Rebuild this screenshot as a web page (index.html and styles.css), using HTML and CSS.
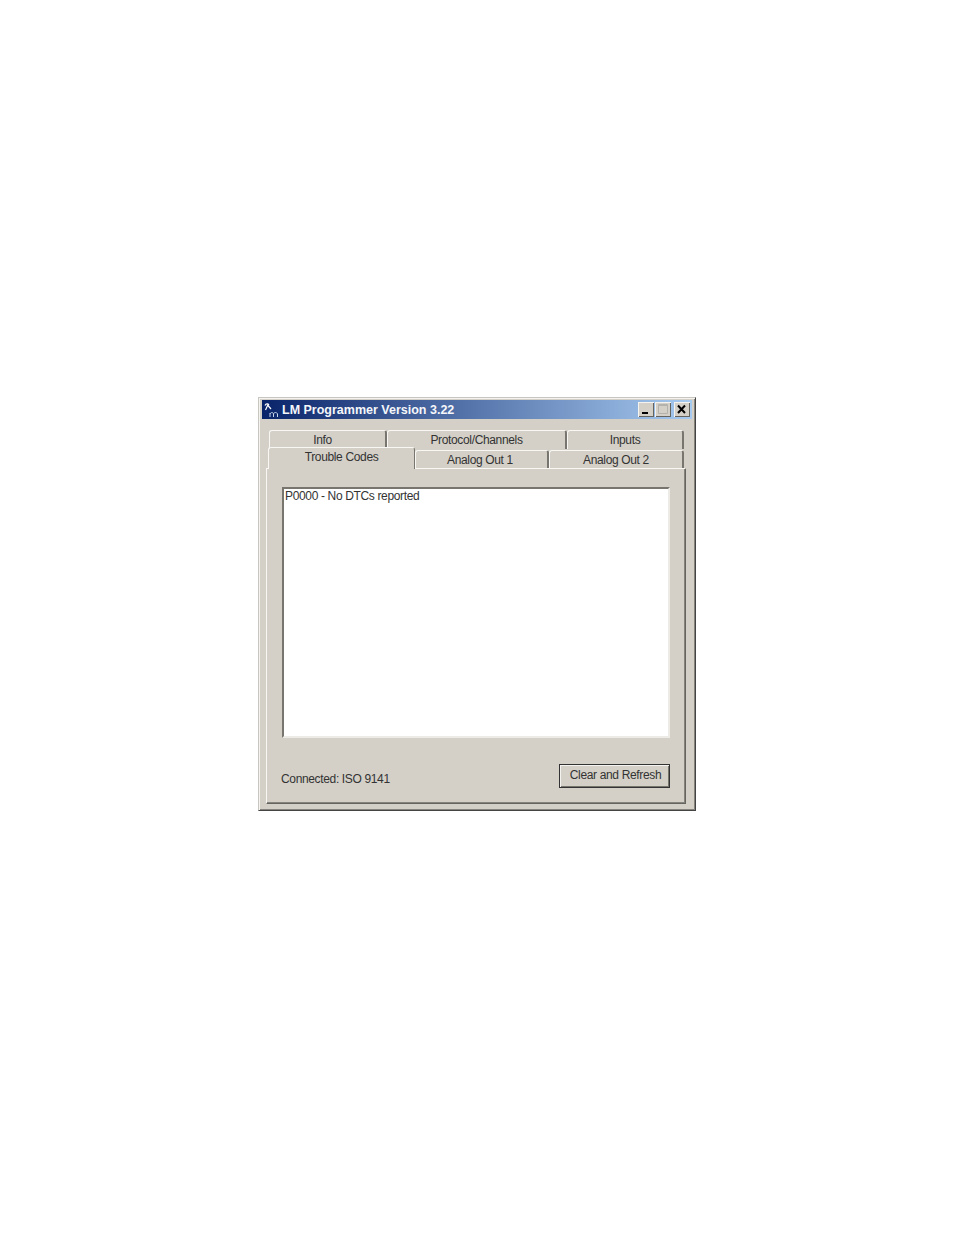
FILE: index.html
```html
<!DOCTYPE html>
<html>
<head>
    <title>LM Programmer Version 3.22</title>
    <link rel="stylesheet" href="styles.css">
</head>
<body>
    <div class="window">
        <div class="title-bar">
            <svg class="app-icon" width="16" height="16" viewBox="0 0 16 16">
                <path d="M2 3.5 C3 1.5 5 1.5 6 3 M5 2.5 L2.5 8 M5 3.5 L8 7" fill="none" stroke="#ffffff" stroke-width="1.2"/>
                <path d="M7 15 V11 M7 12 C8 10 10 10 10.5 12 V15 M10.5 12 C11 10 14 10 14.5 12 V15" fill="none" stroke="#c8d4e8" stroke-width="1"/>
            </svg>
            <span class="title-text">LM Programmer Version 3.22</span>
            <div class="window-buttons">
                <div class="win-btn">
                    <svg width="16" height="15" viewBox="0 0 16 15"><path d="M4 11 H10" stroke="#000" stroke-width="2"/></svg>
                </div>
                <div class="win-btn">
                    <svg width="16" height="15" viewBox="0 0 16 15"><path d="M3.5 2.5 H12.5 V11.5 H3.5 Z M3.5 3.5 H12.5" fill="none" stroke="#b4b2ac" stroke-width="1"/></svg>
                </div>
                <div class="win-btn win-close">
                    <svg width="16" height="15" viewBox="0 0 16 15"><path d="M4 3.5 L11 11 M11 3.5 L4 11" stroke="#000" stroke-width="2"/></svg>
                </div>
            </div>
        </div>

        <div class="tabs">
            <div class="tab-row tab-row-back">
                <div class="tab tab-info">Info</div>
                <div class="tab tab-protocol">Protocol/Channels</div>
                <div class="tab tab-inputs">Inputs</div>
            </div>
            <div class="tab-row tab-row-front">
                <div class="tab tab-trouble selected">Trouble Codes</div>
                <div class="tab tab-out1">Analog Out 1</div>
                <div class="tab tab-out2">Analog Out 2</div>
            </div>
        </div>

        <div class="panel">
            <div class="code-list">P0000 - No DTCs reported</div>
            <div class="panel-footer">
                <span class="status">Connected: ISO 9141</span>
                <button class="refresh-btn">Clear and Refresh</button>
            </div>
        </div>
    </div>
</body>
</html>
```

FILE: styles.css
```css
body {
    margin: 0;
    background: #ffffff;
    font-family: "Liberation Sans", Arial, sans-serif;
    font-size: 12px;
    letter-spacing: -0.35px;
    color: #333333;
}
.window {
    box-sizing: border-box;
    width: 438px;
    height: 414px;
    margin: 397px 0 0 258px;
    padding: 2px 3px 3px 3px;
    background: #d4d0c8;
    border: 1px solid;
    border-color: #c8c6c0 #444444 #444444 #c8c6c0;
    box-shadow: inset 1px 1px 0 #f4f3ef, inset -1px -1px 0 #85837c;
}
.title-bar {
    display: flex;
    align-items: center;
    height: 19px;
    padding-left: 1px;
    background: linear-gradient(to right, #0a246a, #a6caf0);
}
.app-icon {
    flex: none;
}
.title-text {
    margin-left: 3px;
    color: #f4f6fa;
    font-weight: bold;
    font-size: 12.5px;
    letter-spacing: 0;
    white-space: nowrap;
}
.window-buttons {
    display: flex;
    margin-left: auto;
    margin-right: 2px;
}
.win-btn {
    box-sizing: border-box;
    width: 16px;
    height: 15px;
    margin-left: 1px;
    background: #d4d0c8;
    box-shadow: inset 1px 1px 0 #f4f3ef, inset -1px -1px 0 #66645e;
}
.win-btn svg {
    display: block;
}
.win-close {
    margin-left: 3px;
}
.tabs {
    margin-top: 11px;
    padding-left: 4px;
}
.tab-row {
    display: flex;
}
.tab {
    box-sizing: border-box;
    text-align: center;
    background: #d4d0c8;
    border-top: 1px solid #f8f7f4;
    border-left: 1px solid #f8f7f4;
    border-right: 2px solid #77756e;
    border-radius: 3px 3px 0 0;
}
.tab-row-back {
    padding-left: 3px;
}
.tab-row-back .tab {
    height: 19px;
    line-height: 19px;
}
.tab-row-front {
    height: 19px;
    padding-left: 2px;
    align-items: flex-end;
}
.tab-row-front .tab {
    height: 18px;
    line-height: 18px;
}
.tab-info {
    width: 118px;
    padding-right: 10px;
}
.tab-protocol {
    width: 180px;
}
.tab-inputs {
    width: 117px;
}
.tab-trouble {
    width: 147px;
}
.tab-out1 {
    width: 134px;
    padding-right: 3px;
}
.tab-out2 {
    width: 135px;
}
.tab-row-front .tab.selected {
    position: relative;
    z-index: 1;
    height: 22px;
    line-height: 18px;
    padding-bottom: 3px;
    border-right-width: 1px;
    margin-bottom: -1px;
}
.panel {
    box-sizing: border-box;
    width: 420px;
    height: 336px;
    margin-left: 4px;
    padding: 18px 15px 0 15px;
    background: #d4d0c8;
    border: 1px solid;
    border-color: #f8f7f4 #66645e #66645e #f8f7f4;
    box-shadow: inset -1px -1px 0 #85837c;
}
.code-list {
    box-sizing: border-box;
    width: 388px;
    height: 251px;
    padding: 0 1px;
    background: #ffffff;
    border: 2px solid;
    border-color: #77756e #ecebe6 #ecebe6 #77756e;
    line-height: 14px;
}
.panel-footer {
    display: flex;
    justify-content: space-between;
    margin-top: 26px;
}
.status {
    margin: 7px 0 0 -1px;
    line-height: 16px;
}
.refresh-btn {
    box-sizing: border-box;
    width: 111px;
    height: 24px;
    padding: 0 0 2px 2px;
    background: #d4d0c8;
    color: #333333;
    font-family: inherit;
    font-size: 12px;
    letter-spacing: -0.35px;
    border: 1px solid #333333;
    box-shadow: inset 1px 1px 0 #f4f3ef, inset -1px -1px 0 #77756e;
}
```
